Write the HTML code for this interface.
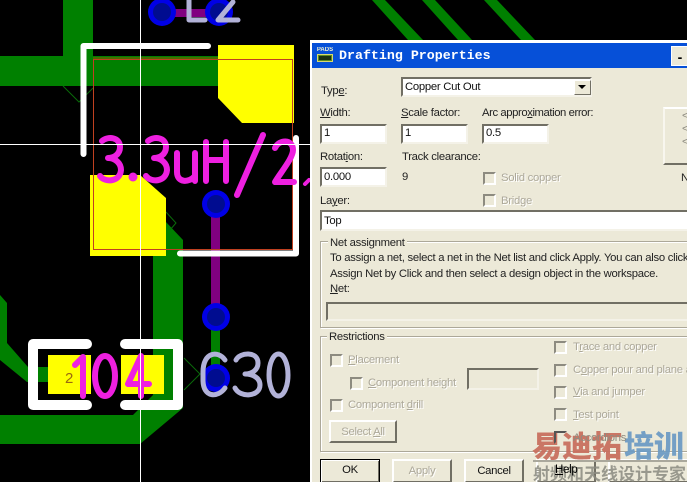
<!DOCTYPE html>
<html><head><meta charset="utf-8"><style>
html,body{margin:0;padding:0;background:#000}
#w{position:relative;width:687px;height:482px;overflow:hidden;background:#000;font-family:"Liberation Sans",sans-serif}
#d{position:absolute;left:310px;top:40px;width:377px;height:442px;background:#ece9d8;border-top:3px solid #fff;border-left:2px solid #fff;box-sizing:border-box}
.a{position:absolute;white-space:nowrap;font-size:11.3px;letter-spacing:-.28px;line-height:14px;color:#222}
.g{color:#aca899;text-shadow:1px 1px 0 #fff}
.i{position:absolute;box-sizing:border-box;background:#fff;border:2px solid;border-color:#716f64 #f4f2e8 #f4f2e8 #716f64;font-size:11.3px;letter-spacing:-.28px;line-height:15px;padding-left:2px;color:#111;white-space:nowrap;overflow:hidden}
.c{position:absolute;box-sizing:border-box;width:13px;height:13px;border:2px solid;border-color:#8d8b80 #fff #fff #8d8b80;background:#ece9d8}
.b{position:absolute;box-sizing:border-box;background:#ece9d8;border:2px solid;border-color:#fff #716f64 #716f64 #fff;text-align:center;font-size:11.3px;letter-spacing:-.3px;line-height:20px;color:#111}
.f{position:absolute;box-sizing:border-box;border:1px solid #aca899;box-shadow:inset 1px 1px 0 #fff,1px 1px 0 #fff}
.l{position:absolute;background:#ece9d8;padding:0 2px;font-size:11.3px;letter-spacing:-.28px;line-height:13px;color:#222;white-space:nowrap}
u{text-decoration-thickness:1px}
</style></head><body><div id="w">
<svg style="position:absolute;left:0;top:0" width="687" height="482" viewBox="0 0 687 482">
<g fill="#008000">
<rect x="63" y="0" width="30" height="60"/><rect x="0" y="56" width="222" height="30"/>
<polygon points="372,0 385,0 423,40 408,40"/><polygon points="422,0 435,0 472,40 458,40"/><polygon points="484,0 497,0 535,40 521,40"/>
<polygon points="153,256 153,345 183,345 183,240 166,222 166,256"/>
<polygon points="0,415 133,415 153,395 153,345 183,345 183,408 140,444 0,444"/>
<polygon points="0,295 7,303 7,343 28,367 48,367 48,382 27,382 0,360"/>
<rect x="211" y="320" width="9" height="60"/>
</g>
<polyline points="63,86 79,102 93,88" fill="none" stroke="#0a6a0a" stroke-width="1"/>
<polyline points="166,212 176,223 170,230" fill="none" stroke="#0a6a0a" stroke-width="1"/>
<polyline points="184,358 200,374 184,390" fill="none" stroke="#0a6a0a" stroke-width="1"/>
<g fill="#ffff00">
<polygon points="218,45 294,45 294,123 242,123 218,98"/>
<polygon points="90,175 140,175 166,198 166,256 90,256"/>
<rect x="48" y="355" width="43" height="39"/><rect x="121" y="355" width="43" height="39"/>
</g>
<rect x="211" y="204" width="9" height="114" fill="#800080"/>
<rect x="172" y="9" width="48" height="8" fill="#800080"/>
<rect x="93.500" y="59.500" width="199" height="190" fill="none" stroke="#c04020" stroke-width="1"/>
<line x1="93" y1="58" x2="218" y2="58" stroke="#4a6a00" stroke-width="2"/>
<g fill="#0000e6">
<circle cx="162" cy="12" r="14"/><circle cx="219" cy="12" r="14"/><circle cx="216" cy="204" r="14"/><circle cx="216" cy="317" r="14"/><circle cx="216" cy="378" r="14"/>
</g>
<g fill="#000c90">
<circle cx="162" cy="12" r="9"/><circle cx="219" cy="12" r="9"/><circle cx="216" cy="204" r="9"/><circle cx="216" cy="317" r="9"/><circle cx="216" cy="378" r="9"/>
</g>
<g fill="none" stroke="#fff" stroke-linecap="round" stroke-linejoin="round">
<path d="M83.500 154V46H208" stroke-width="6"/>
<path d="M296 138V253.500H180" stroke-width="6"/>
<path d="M87 344H33V405H87M125 344H178V405H125" stroke-width="10"/>
</g>
<g fill="none" stroke="#b2b2d8" stroke-width="5" stroke-linecap="round" stroke-linejoin="round">
<path d="M189 0V20H205M233 2L218 20H238"/>
<path d="M225 360C218 350 203 352 203 372V380C203 398 218 398 225 388"/>
<path d="M236 360C240 352 258 351 258 363C258 370 252 374 245 374C253 374 260 378 260 385C260 397 240 398 235 388"/>
<ellipse cx="278.500" cy="375" rx="9.500" ry="21"/>
</g>
<g fill="none" stroke="#ee20e0" stroke-width="6" stroke-linecap="round" stroke-linejoin="round">
<path d="M102 141C108 136 120 137 120 147C120 155 113 158 108 158C115 158 121 163 121 170C120 182 105 183 100 176"/>
<path d="M148 141C154 136 166 137 166 147C166 155 159 158 154 158C161 158 167 163 167 170C166 182 151 183 146 176"/>
<path d="M177 153V172C177 183 189 183 195 176V153M195 176V181"/>
<path d="M206 142V181M226 142V181M206 160H226"/>
<path d="M263 135L237 195"/>
<path d="M275 148C279 139 293 139 293 150C293 158 281 172 275 182H294"/>
<path d="M309 180L305 184" stroke-width="4"/>
<path d="M75 365L83 357V396"/>
<ellipse cx="105" cy="376" rx="10" ry="20"/>
<path d="M141 396V356L128 384H149"/>
</g>
<circle cx="133" cy="177" r="4.500" fill="#ee20e0"/>
<text x="65" y="383" font-family="Liberation Sans,sans-serif" font-size="15" fill="#9a6a10">2</text>
<rect x="140" y="0" width="1" height="482" fill="#fff"/>
<rect x="0" y="144" width="310" height="1" fill="#fff"/>
</svg>
<div id="d">
<div style="position:absolute;left:0;top:0;right:0;height:25px;background:#0650d8"></div>
<div style="position:absolute;left:4px;top:4px;width:18px;height:17px;background:#0650d8;color:#f0f0d0;font:bold 6px/7px 'Liberation Sans',sans-serif;overflow:hidden;text-align:center">PADS<div style="height:8px;background:#5a8a20;margin:0 1px;border:1px solid #d8d870;box-sizing:border-box"><div style="height:4px;margin:1px;background:#1a3010"></div></div></div>
<div class="a" style="left:27px;top:5px;letter-spacing:0;font:bold 13.3px/16px 'Liberation Mono',monospace;color:#fff">Drafting Properties</div>
<div style="position:absolute;left:359px;top:3px;width:18px;height:20px;background:#ece9d8;border:1px solid #fff;box-sizing:border-box;font:bold 14px/20px 'Liberation Sans',sans-serif;text-align:center;color:#000">-</div>
</div>
<div class="a" style="left:321px;top:84px">Typ<u>e</u>:</div>
<div class="i" style="left:401px;top:77px;width:191px;height:20px;line-height:17px">Copper Cut Out</div>
<div class="b" style="left:574px;top:80px;width:17px;height:15px;border-width:1px"></div>
<svg style="position:absolute;left:578px;top:85px" width="9" height="5"><polygon points="0,0 8,0 4,4" fill="#000"/></svg>
<div class="a" style="left:320px;top:106px"><u>W</u>idth:</div>
<div class="a" style="left:401px;top:106px"><u>S</u>cale factor:</div>
<div class="a" style="left:482px;top:106px;letter-spacing:-.42px">Arc appro<u>x</u>imation error:</div>
<div class="i" style="left:320px;top:124px;width:67px;height:20px">1</div>
<div class="i" style="left:401px;top:124px;width:67px;height:20px">1</div>
<div class="i" style="left:482px;top:124px;width:67px;height:20px">0.5</div>
<div class="a" style="left:320px;top:150px">Rotat<u>i</u>on:</div>
<div class="a" style="left:402px;top:150px">Track clearance:</div>
<div class="i" style="left:320px;top:167px;width:67px;height:20px;line-height:16px">0.000</div>
<div class="a" style="left:402px;top:170px">9</div>
<div class="c" style="left:483px;top:172px"></div><div class="a g" style="left:501px;top:171px">Solid copper</div>
<div class="c" style="left:483px;top:194px"></div><div class="a g" style="left:501px;top:194px">Bridge</div>
<div class="a" style="left:320px;top:194px">La<u>y</u>er:</div>
<div class="i" style="left:320px;top:210px;width:380px;height:21px;line-height:18px">Top</div>
<div class="b" style="left:663px;top:107px;width:40px;height:58px;border-color:#fff #716f64 #716f64 #f8f6ee"></div>
<div class="a" style="left:682px;top:110px;color:#8d8b80;line-height:13px">&lt;<br>&lt;<br>&lt;</div>
<div class="a" style="left:681px;top:171px">N</div>
<div class="f" style="left:320px;top:241px;width:400px;height:87px"></div>
<div class="l" style="left:328px;top:237px">Net assignment</div>
<div class="a" style="left:330px;top:251px">To assign a net, select a net in the Net list and click Apply. You can also click</div>
<div class="a" style="left:330px;top:267px">Assign Net by Click and then select a design object in the workspace.</div>
<div class="a" style="left:330px;top:282px"><u>N</u>et:</div>
<div class="i" style="left:326px;top:302px;width:380px;height:19px;background:#ece9d8"></div>
<div class="f" style="left:320px;top:336px;width:400px;height:116px"></div>
<div class="l" style="left:327px;top:331px">Restrictions</div>
<div class="c" style="left:330px;top:354px"></div><div class="a g" style="left:348px;top:353px"><u>P</u>lacement</div>
<div class="c" style="left:350px;top:377px"></div><div class="a g" style="left:368px;top:376px"><u>C</u>omponent height</div>
<div class="i" style="left:467px;top:368px;width:72px;height:22px;background:#ece9d8"></div>
<div class="c" style="left:330px;top:399px"></div><div class="a g" style="left:348px;top:398px">Component <u>d</u>rill</div>
<div class="b" style="left:329px;top:420px;width:68px;height:23px;color:#aca899;text-shadow:1px 1px 0 #fff">Select <u>A</u>ll</div>
<div class="c" style="left:554px;top:341px"></div><div class="a g" style="left:573px;top:340px">T<u>r</u>ace and copper</div>
<div class="c" style="left:554px;top:364px"></div><div class="a g" style="left:573px;top:363px">C<u>o</u>pper pour and plane area</div>
<div class="c" style="left:554px;top:386px"></div><div class="a g" style="left:573px;top:385px"><u>V</u>ia and jumper</div>
<div class="c" style="left:554px;top:408px"></div><div class="a g" style="left:573px;top:408px"><u>T</u>est point</div>
<div class="b" style="left:320px;top:459px;width:60px;height:24px;border:1px solid #000;box-shadow:inset 1px 1px 0 #fff,inset -1px -1px 0 #716f64">OK</div>
<div class="b" style="left:392px;top:459px;width:60px;height:24px;color:#aca899;text-shadow:1px 1px 0 #fff">Apply</div>
<div class="b" style="left:464px;top:459px;width:60px;height:24px">Cancel</div>
<div class="b" style="left:536px;top:459px;width:60px;height:24px;color:transparent"></div>
<div class="b" style="left:608px;top:459px;width:90px;height:24px"></div>
<div class="a" style="left:532px;top:428px;letter-spacing:0;font:900 30px/32px 'Noto Sans CJK SC',sans-serif;color:#c9705f;opacity:.95">易迪拓</div>
<div class="a" style="left:624px;top:428px;letter-spacing:0;font:900 30px/32px 'Noto Sans CJK SC',sans-serif;color:#6e9cc4;opacity:.95">培训</div>
<div style="position:absolute;left:533px;top:460px;width:154px;height:2px;background:#aaa89c"></div>
<div class="a" style="left:533px;top:463px;letter-spacing:0;font:bold 17px/19px 'Noto Sans CJK SC',sans-serif;color:#8a8a80;opacity:.85">射频和天线设计专家</div>
<div class="c" style="left:554px;top:431px;background:transparent;border-color:#555 transparent transparent #555"></div><div class="a" style="left:573px;top:431px;color:#8f8c80">Accordions</div>
<div class="a" style="left:555px;top:463px;font-size:11.5px;color:#000"><u>H</u>elp</div>
</div></body></html>
